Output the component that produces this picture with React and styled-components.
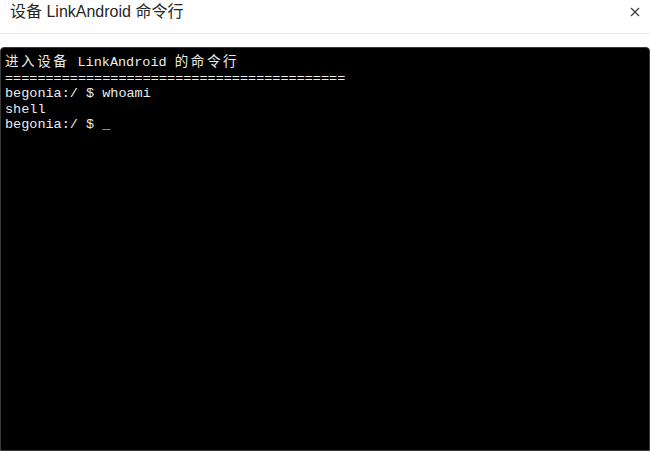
import React from "react";
import styled, {createGlobalStyle} from "styled-components";

const GlobalStyle = createGlobalStyle`
  html, body {
    margin: 0;
    padding: 0;
    background: #fff;
  }
  #root {
    height: 451px;
  }
`;

const Modal = styled.div`
  display: flex;
  flex-direction: column;
  width: 650px;
  height: 451px;
  background: #fff;
  overflow: hidden;
`;

const Header = styled.div`
  display: flex;
  align-items: center;
  justify-content: space-between;
  padding: 0 8px 0 10px;
  border-bottom: 1px solid #e9e9e9;
  box-sizing: border-box;
  height: 34px;
`;

const Title = styled.h3`
  margin: 0 0 9px;
  font-family: "Liberation Sans", "Noto Sans CJK SC", sans-serif;
  font-size: 16px;
  font-weight: 400;
  color: #262626;
  line-height: 22px;
`;

const Close = styled.button`
  display: flex;
  align-items: center;
  justify-content: center;
  width: 14px;
  height: 14px;
  margin-bottom: 10px;
  padding: 0;
  border: 0;
  background: none;
  color: #444;
  cursor: pointer;
`;

const Body = styled.div`
  flex: 1;
  display: flex;
  padding-top: 13px;
`;

const Terminal = styled.div`
  flex: 1;
  background: #000;
  border: 1px solid #3a3a3a;
  border-radius: 4px 4px 0 0;
  padding: 5px 4px;
  font-family: "Liberation Mono", "Noto Sans CJK SC", monospace;
  font-size: 13.5px;
  line-height: 15.5px;
  color: #ececec;
`;

const Line = styled.div`
  white-space: pre;
`;

const Wide = styled.span`
  font-family: "Noto Sans CJK SC", sans-serif;
  letter-spacing: 2.6px;
`;

export default function App() {
  return (
    <>
      <GlobalStyle />
      <Modal>
        <Header>
          <Title>设备 LinkAndroid 命令行</Title>
          <Close aria-label="close">
            <svg width="10" height="10" viewBox="0 0 10 10">
              <path d="M1 1L9 9M9 1L1 9" stroke="currentColor" strokeWidth="1.4" />
            </svg>
          </Close>
        </Header>
        <Body>
          <Terminal>
            <Line>
              <Wide>进入设备</Wide> LinkAndroid <Wide>的命令行</Wide>
            </Line>
            <Line>{"=".repeat(42)}</Line>
            <Line>begonia:/ $ whoami</Line>
            <Line>shell</Line>
            <Line>begonia:/ $ _</Line>
          </Terminal>
        </Body>
      </Modal>
    </>
  );
}
